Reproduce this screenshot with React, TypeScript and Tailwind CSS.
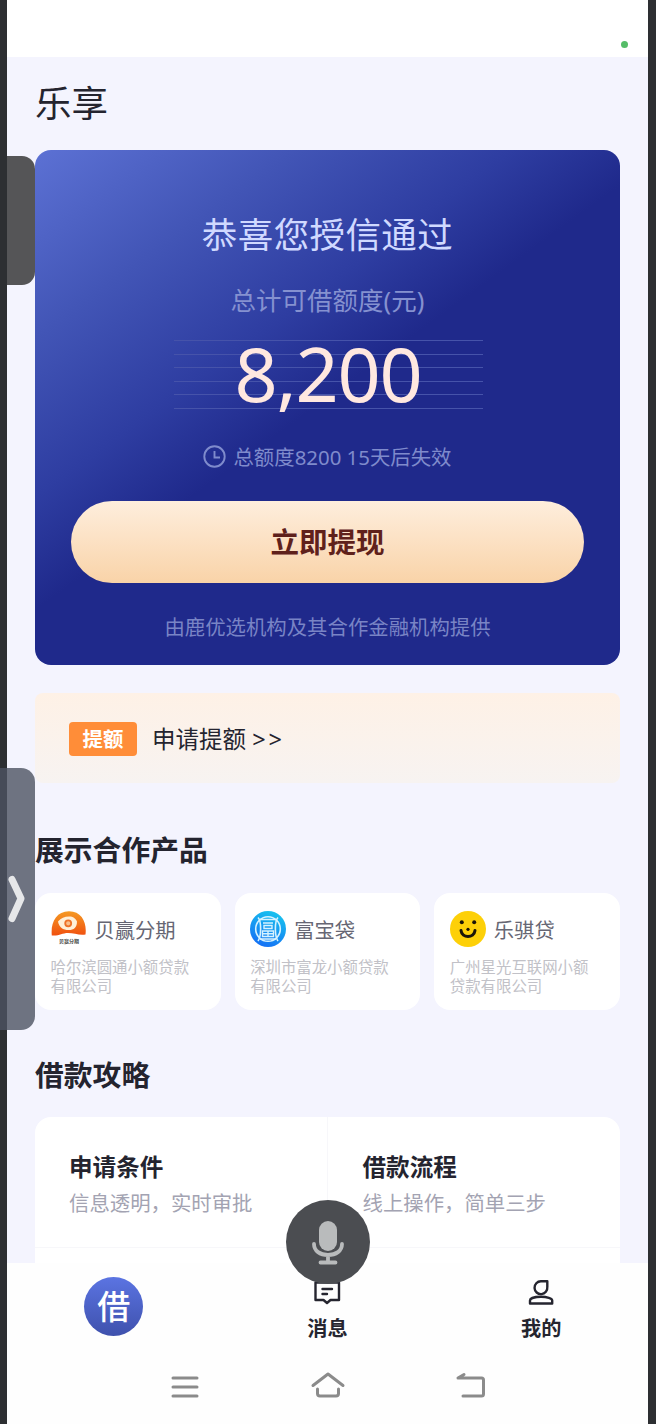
import React from 'react';

const products = [
  { name: '贝赢分期', company: '哈尔滨圆通小额贷款有限公司', logo: <BeiyingLogo /> },
  { name: '富宝袋', company: '深圳市富龙小额贷款有限公司', logo: <FubaoLogo /> },
  { name: '乐骐贷', company: '广州星光互联网小额贷款有限公司', logo: <LeqiLogo /> },
];

const guides = [
  { title: '申请条件', desc: '信息透明，实时审批' },
  { title: '借款流程', desc: '线上操作，简单三步' },
];

function BeiyingLogo() {
  return (
    <svg className="h-9 w-9 shrink-0" viewBox="0 0 36 36">
      <defs>
        <linearGradient id="beiying" x1="0" y1="0" x2="0" y2="1">
          <stop offset="0" stopColor="#f59a23" />
          <stop offset="1" stopColor="#f0500f" />
        </linearGradient>
      </defs>
      <path d="M.8 24.500C-.5 12 5 .3 18 .3S36 12 34.500 23.500C28 24.500 23 22 17 22S8 25.200 .8 24.500Z" fill="url(#beiying)" />
      <path d="M7 10.500C10 7 13.500 5.500 18 5.500S24 7 26 10.500C26 16.500 23 19 17.500 19S8 16.500 7 10.500Z" fill="#fff0d8" />
      <circle cx="17.200" cy="12.300" r="3" fill="#f8c08c" stroke="#ee7228" strokeWidth="1.800" />
      <text x="18" y="32" textAnchor="middle" fontSize="5" fontWeight="700" fill="#444">贝赢分期</text>
    </svg>
  );
}

function FubaoLogo() {
  return (
    <svg className="h-9 w-9 shrink-0" viewBox="0 0 36 36">
      <defs>
        <linearGradient id="fubao" x1=".7" y1="0" x2=".3" y2="1">
          <stop offset="0" stopColor="#18c4ee" />
          <stop offset="1" stopColor="#146ef5" />
        </linearGradient>
      </defs>
      <circle cx="18" cy="18" r="18" fill="url(#fubao)" />
      <g fill="none" stroke="#d6f2ff" strokeWidth="1.600">
        <circle cx="18" cy="18" r="12.300" />
        <path d="M8 6.500C11.500 10 11.500 25 8 30M28 6.500C24.500 10 24.500 25 28 30M10 8.500h16M10 28h16" />
        <path d="M13 12h10M14 14.500h8v3h-8zM12.500 20h11v5.500h-11zM18 20v5.500M12.500 22.800h11" strokeWidth="1.400" />
      </g>
    </svg>
  );
}

function LeqiLogo() {
  return (
    <svg className="h-9 w-9 shrink-0" viewBox="0 0 36 36">
      <circle cx="18" cy="18" r="18" fill="#fdd008" />
      <circle cx="11.800" cy="11.300" r="2" fill="#1b1508" />
      <circle cx="24.200" cy="11.300" r="2" fill="#1b1508" />
      <circle cx="18" cy="18.300" r="1.600" fill="#1b1508" />
      <path d="M11 19.500C12 27.500 24 27.500 25 19.500" fill="none" stroke="#1b1508" strokeWidth="3" strokeLinecap="round" />
    </svg>
  );
}

function CreditCard() {
  return (
    <section className="flex h-[515px] flex-col items-center rounded-2xl bg-[linear-gradient(144deg,#5c71d4_0%,#4255b6_20%,#2e3da1_37%,#1f298b_49%,#1f298b_100%)]">
      <h2 className="mt-[60px] text-[35.500px] leading-[48px] tracking-[0.400px] text-[#d0d9ff]">恭喜您授信通过</h2>
      <p className="mt-[26px] text-[25.500px] leading-8 text-[#8591d0]">总计可借额度(元)</p>
      <div className="mt-[24px] ml-px flex h-[69px] w-[309px] justify-center bg-[repeating-linear-gradient(180deg,#4653aa_0px,#4653aa_1px,transparent_1px,transparent_13.600px)]">
        <span className="-mt-[2px] text-[75.500px] leading-[70px] tracking-[-1.200px] text-[#ffe8e0]">8,200</span>
      </div>
      <div className="mt-8 flex items-center gap-[7px] text-[#7f8bcc]">
        <svg className="mb-0.5 h-[23px] w-[23px]" viewBox="0 0 23 23" fill="none" stroke="currentColor" strokeWidth="1.900">
          <circle cx="11.500" cy="11.500" r="10.200" />
          <path d="M11.500 6v6.500h5.500" />
        </svg>
        <span className="text-[20.400px] leading-8">总额度8200 15天后失效</span>
      </div>
      <button className="mt-[28px] h-[82px] w-[513px] rounded-full bg-linear-to-b from-[#feeedd] to-[#f9d3a8] text-[28.500px] font-bold text-[#5f211b]">
        立即提现
      </button>
      <p className="mt-[28px] text-[20.400px] leading-8 text-[#7984c5]">由鹿优选机构及其合作金融机构提供</p>
    </section>
  );
}

function TabBar() {
  return (
    <nav className="grid h-[86px] grid-cols-3 text-[20.200px] leading-6 font-bold text-[#25252f]">
      <div className="flex justify-center pt-[14px]">
        <span className="flex h-[59px] w-[59px] items-center justify-center rounded-full bg-linear-to-b from-[#5b74e2] to-[#3f51ad] text-[33px] font-medium text-white">
          借
        </span>
      </div>
      <div className="flex flex-col items-center pt-[15px]">
        <svg className="h-7 w-7" viewBox="0 0 28 28" fill="none" stroke="currentColor" strokeWidth="2.400" strokeLinejoin="round">
          <path d="M2.500 4.500h23.500v17.500h-8.500l-3.500 3l-3.500-3H2.500z" />
          <path d="M9.500 11h9.500M9.500 16h4.500" strokeLinecap="round" />
        </svg>
        <span className="mt-[10px]">消息</span>
      </div>
      <div className="flex flex-col items-center pt-[15px]">
        <svg className="h-7 w-7" viewBox="0 0 28 28" fill="none" stroke="currentColor" strokeWidth="2.400" strokeLinejoin="round">
          <path d="M20.300 3.300V9A6.400 6.400 0 1 1 13.900 3.300z" />
          <path d="M3 25.500V22.500C3 20.300 8 18.800 14 18.800S25.200 20.300 25.200 22.500V25.500z" />
        </svg>
        <span className="mt-[10px]">我的</span>
      </div>
    </nav>
  );
}

function SystemNav() {
  return (
    <div className="flex h-[75px] items-center justify-center gap-[107px] text-[#8b8b8b]">
      <svg className="h-9 w-9" viewBox="0 0 36 36" fill="none" stroke="currentColor" strokeWidth="3" strokeLinecap="round">
        <path d="M6 9h24M6 18h24M6 27h24" />
      </svg>
      <svg className="h-9 w-9" viewBox="0 0 36 36" fill="none" stroke="currentColor" strokeWidth="3" strokeLinecap="round" strokeLinejoin="round">
        <path d="M3 16.500L18 5L33 16.500" />
        <path d="M7.500 20V24.500Q7.500 27 10 27H26Q28.500 27 28.500 24.500V20" />
      </svg>
      <svg className="h-9 w-9" viewBox="0 0 36 36" fill="none" stroke="currentColor" strokeWidth="3" strokeLinecap="round" strokeLinejoin="round">
        <path d="M10 27H28.500Q30.500 27 30.500 25V11Q30.500 9 28.500 9H5L11 5.500" />
      </svg>
    </div>
  );
}

export default function App() {
  return (
    <div className="relative h-[1424px] w-[656px] overflow-hidden font-['Noto_Sans','Noto_Sans_CJK_SC',sans-serif] text-[#24242f]">
      <div className="flex h-full flex-col border-r-8 border-l-[7px] border-[#2d2f32] bg-[#f4f4fe]">
        {/* Status bar */}
        <div className="flex h-[57px] shrink-0 justify-end bg-white pt-[41px] pr-5">
          <span className="h-[7px] w-[7px] rounded-full bg-[#55bd68]" />
        </div>

        <main className="h-[1206px] shrink-0 overflow-hidden px-7">
          <h1 className="flex h-[93px] items-center text-[36.500px] leading-none">乐享</h1>

          <CreditCard />

          <div className="mt-7 flex h-[90px] items-center gap-[15px] rounded-lg bg-linear-to-b from-[#fef1e6] to-[#f7f3f1] pt-0.5 pl-[34px]">
            <span className="flex h-[34px] w-[68px] items-center justify-center rounded-[4px] bg-[#ff8d38] text-[20.400px] font-bold text-white">
              提额
            </span>
            <span className="pt-0.5 text-[23.500px]">
              申请提额 <span className="tracking-[3px]">&gt;&gt;</span>
            </span>
          </div>

          <h2 className="mt-[47px] text-[28.800px] leading-10 font-bold">展示合作产品</h2>
          <div className="mt-[23px] grid grid-cols-3 gap-[14px]">
            {products.map((item) => (
              <div key={item.name} className="h-[117px] rounded-2xl bg-white pt-[18px] pl-[15.500px]">
                <div className="flex items-center gap-2">
                  {item.logo}
                  <span className="pt-0.5 text-[20.300px] leading-[34px] text-[#666673]">{item.name}</span>
                </div>
                <p className="mt-3 w-[142px] text-[15.400px] leading-[18.600px] text-[#c1c1c7]">{item.company}</p>
              </div>
            ))}
          </div>

          <h2 className="mt-[45px] text-[28.800px] leading-10 font-bold">借款攻略</h2>
          <div className="mt-[22px] grid h-[160px] grid-cols-2 rounded-t-2xl bg-white">
            {guides.map((item) => (
              <div key={item.title} className="h-[131px] border-b border-[#f7f7fa] pt-[34px] pl-[34px] first:border-r last:pl-[35px]">
                <h3 className="text-[23.600px] leading-8 font-bold">{item.title}</h3>
                <p className="mt-1 text-[20.400px] leading-8 text-[#a3a3b2]">{item.desc}</p>
              </div>
            ))}
          </div>
        </main>

        <footer className="flex-1 bg-[#fefefe]">
          <TabBar />
          <SystemNav />
        </footer>
      </div>

      {/* Floating controls over the page */}
      <div className="absolute top-[156px] left-[7px] h-[129px] w-7 rounded-r-[13px] bg-[#555557]" />
      <button className="absolute top-[768px] left-0 flex h-[262px] w-[35px] items-center rounded-r-[14px] bg-[#4c5262]/80 pl-[7px]" aria-label="展开">
        <svg className="h-12 w-5" viewBox="0 0 20 48" fill="none" stroke="#e6e7e9" strokeWidth="7" strokeLinecap="round" strokeLinejoin="round">
          <path d="M5 4.500L14 23.500L5 43.500" />
        </svg>
      </button>
      <button className="absolute top-[1200px] left-[286px] flex h-[84px] w-[84px] items-center justify-center rounded-full bg-[#4b4d51]" aria-label="语音">
        <svg className="h-[46px] w-8" viewBox="0 0 32 46" fill="none" stroke="#b9bbbc" strokeWidth="3.800" strokeLinecap="round">
          <rect x="7" y="2" width="18" height="30" rx="9" fill="#b9bbbc" stroke="none" />
          <path d="M2 25C2 32 8 36 16 36S30 32 30 25M16 37v6M8.500 43.500h15" />
        </svg>
      </button>
    </div>
  );
}
